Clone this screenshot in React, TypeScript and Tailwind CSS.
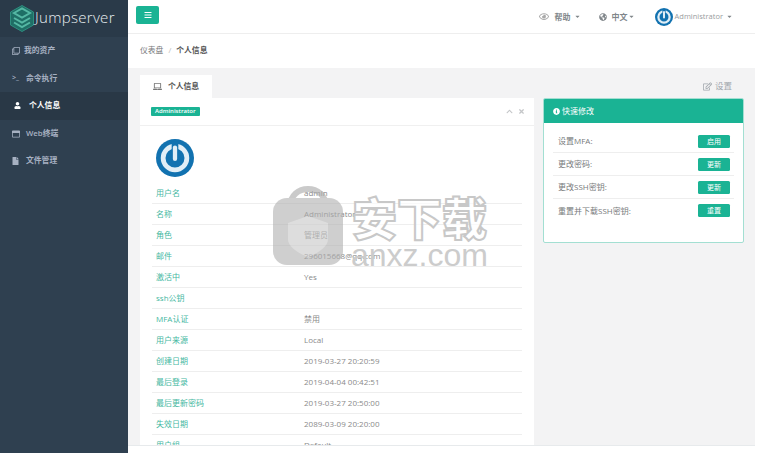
import { FaBars, FaCaretDown, FaChevronUp, FaFile, FaGlobeAmericas, FaInfoCircle, FaLaptop, FaRegClone, FaRegEdit, FaRegEye, FaRegWindowMaximize, FaTimes, FaUser } from "react-icons/fa";
import type { ReactNode } from "react";

const font = "font-['Open_Sans','Noto_Sans_CJK_SC',sans-serif]";

function Avatar({ size }: { size: string }) {
  return (
    <svg viewBox="0 0 40 40" className={size}>
      <circle cx="20" cy="20" r="20" fill="#1272b0" />
      <circle cx="20" cy="20" r="12.500" fill="none" stroke="#e1eef6" strokeWidth="5" />
      <path d="M20 3v8" stroke="#1272b0" strokeWidth="7" />
      <path d="M20 9v12" stroke="#e1eef6" strokeWidth="4.500" strokeLinecap="round" />
    </svg>
  );
}

function Logo() {
  return (
    <svg viewBox="0 0 24 27" className="w-6 h-[27px] shrink-0">
      <path d="M12 .5l11.500 6.500v13L12 26.500.5 20V7z" fill="#1f6f66" stroke="#2f8f80" strokeWidth="1" />
      <path d="M4 8l8-4.500L20 8l-8 4.500zM4 13l8 4.500L20 13M4 17.500l8 4.500 8-4.500" fill="none" stroke="#55b8a4" strokeWidth="2" />
      <path d="M8 8l4 2 4-2" fill="none" stroke="#1f6f66" strokeWidth="1.200" />
    </svg>
  );
}

const nav: { icon: ReactNode; label: string; active?: boolean; pad: string }[] = [
  { icon: <FaRegClone className="w-2 h-2" />, label: "我的资产", pad: "gap-1" },
  { icon: <span className="text-[7px] w-2">&gt;_</span>, label: "命令执行", pad: "gap-1.5" },
  { icon: <FaUser className="w-[7px] h-[7px] text-white" />, label: "个人信息", active: true, pad: "gap-2" },
  { icon: <FaRegWindowMaximize className="w-2 h-2" />, label: "Web终端", pad: "gap-1.5" },
  { icon: <FaFile className="w-[7px] h-2" />, label: "文件管理", pad: "gap-[7px]" },
];

const rows = [
  ["用户名", "admin"],
  ["名称", "Administrator"],
  ["角色", "管理员"],
  ["邮件", "296015668@qq.com"],
  ["激活中", "Yes"],
  ["ssh公钥", ""],
  ["MFA认证", "禁用"],
  ["用户来源", "Local"],
  ["创建日期", "2019-03-27 20:20:59"],
  ["最后登录", "2019-04-04 00:42:51"],
  ["最后更新密码", "2019-03-27 20:50:00"],
  ["失效日期", "2089-03-09 20:20:00"],
  ["用户组", "Default"],
];

const quick = [
  ["设置MFA:", "启用"],
  ["更改密码:", "更新"],
  ["更改SSH密钥:", "更新"],
  ["重置并下载SSH密钥:", "重置"],
];

export default function App() {
  return (
    <div className={`${font} relative flex h-[453px] w-[762px] overflow-hidden bg-white text-[8px] text-[#777a7c]`}>
      <aside className="w-[128px] shrink-0 bg-[#2f4050] text-[#a7b1c2] font-semibold text-[7.8px]">
        <div className="h-[37px] flex items-center gap-px pl-[10px] bg-[#2a3a49]">
          <Logo />
          <span className="text-[15px] font-light text-[#e8eef0] tracking-[0.3px] -mt-[3px]">Jumpserver</span>
        </div>
        {nav.map((n) => (
          <div
            key={n.label}
            className={`h-[27.6px] flex items-center pl-3 ${n.pad} ${n.active ? "bg-[#293846] text-white pl-[14px]" : ""}`}
          >
            {n.icon}
            <span>{n.label}</span>
          </div>
        ))}
      </aside>

      <div className="flex-1 flex flex-col min-w-0 mr-[7px]">
        <header className="h-[34px] shrink-0 flex items-center justify-between pl-[8px] pr-[22px] border-b border-[#eeeeee]">
          <button className="w-[23px] h-[18px] -mt-[3px] rounded-[2px] bg-[#1ab394] text-white flex items-center justify-center">
            <FaBars className="w-2 h-2" />
          </button>
          <div className="flex items-center font-semibold text-[#80868a]">
            <FaRegEye className="w-[12px] h-[9px] mr-[5px] text-[#aaa]" />
            <span>帮助</span>
            <FaCaretDown className="w-[7px] h-[7px] ml-[3px]" />
            <FaGlobeAmericas className="w-2 h-2 ml-[18px] mr-[5px]" />
            <span>中文</span>
            <FaCaretDown className="w-[7px] h-[7px]" />
            <span className="ml-[20px] mr-[2px]"><Avatar size="w-[18px] h-[18px] block" /></span>
            <span className="font-normal text-[#999c9e] text-[7.5px]">Administrator</span>
            <FaCaretDown className="w-[7px] h-[7px] ml-[3px]" />
          </div>
        </header>

        <div className="h-[34px] shrink-0 flex items-center pl-3 text-[7.8px]">
          <span>仪表盘</span>
          <span className="mx-[5px] text-[#bbb]">/</span>
          <span className="font-bold text-[#555]">个人信息</span>
        </div>

        <main className="flex-1 min-h-0 overflow-hidden bg-[#f3f3f4] pl-3 pr-[11px] pt-[7px] flex flex-col">
          <div className="flex items-end justify-between h-[23px] shrink-0">
            <div className="w-[72px] h-[23px] bg-white flex items-center justify-center gap-[6px] font-semibold text-[#555] text-[7.8px]">
              <FaLaptop className="w-[9px] h-[9px] text-[#777]" />
              <span>个人信息</span>
            </div>
            <div className="flex items-center gap-[3px] self-center pr-[12px] text-[#a0a6ac] text-[8.500px]">
              <FaRegEdit className="w-[9px] h-[9px]" />
              <span>设置</span>
            </div>
          </div>
          <div className="flex gap-[9px] flex-1 min-h-0">
            <section className="w-[394px] shrink-0 bg-white overflow-hidden">
              <div className="h-[28px] flex items-center justify-between pl-[11px] pr-[9px] border-b border-[#f0f0f0]">
                <span className="bg-[#1ab394] text-white text-[6px] font-semibold leading-[9px] px-[4px] rounded-[1px]">Administrator</span>
                <div className="flex items-center gap-[5px] text-[#c4c6c8]">
                  <FaChevronUp className="w-[7px] h-[7px]" />
                  <FaTimes className="w-[7px] h-[7px]" />
                </div>
              </div>
              <div className="px-[12px]">
                <div className="pl-[4px] pt-[13px] pb-[6px]">
                  <Avatar size="w-[38px] h-[38px] block" />
                </div>
                {rows.map(([k, v]) => (
                  <div key={k} className="h-[21px] flex items-center border-b border-[#eeeeee] pl-[4px]">
                    <span className="w-[148px] text-[#45b89f]">{k}</span>
                    <span className="text-[#8a8a8a]">{v}</span>
                  </div>
                ))}
              </div>
            </section>
            <aside className="w-[201px] h-[145px] rounded-[2px] border border-[#a3dfd2] bg-white overflow-hidden">
              <div className="h-[24px] bg-[#1ab394] text-white flex items-center gap-[2px] pl-[9px]">
                <FaInfoCircle className="w-[7px] h-[7px]" />
                <span>快速修改</span>
              </div>
              <div className="px-[9px] pt-[7px]">
                {quick.map(([k, b], i) => (
                  <div key={k} className={`h-[23px] flex items-center justify-between pl-[5px] pr-[4px] ${i < 3 ? "border-b border-[#eeeeee]" : ""}`}>
                    <span>{k}</span>
                    <button className="w-[32px] h-[13px] rounded-[1.500px] bg-[#1ab394] text-white text-[7px] leading-none">{b}</button>
                  </div>
                ))}
              </div>
            </aside>
          </div>
        </main>
        <div className="h-2 shrink-0 bg-white border-t border-[#e7eaec]" />
      </div>

      {/* site watermark sitting over the page */}
      <div className="absolute left-[273px] top-[185px] flex items-start gap-[8px] pointer-events-none">
        <svg viewBox="0 0 70 80" className="w-[70px] h-[80px] opacity-60">
          <path d="M17 22C17 -2 53 -2 53 22" fill="none" stroke="#a8a8a8" strokeWidth="6" />
          <rect x="0" y="13" width="70" height="67" rx="14" fill="#b0b0b0" />
          <path d="M35 31l20 7v16c0 8-10 14-20 18-10-4-20-10-20-18V38z" fill="#c8c8c8" />
        </svg>
        <div className="flex flex-col items-center mt-[7px]">
          <span className="font-['Noto_Sans_CJK_SC',sans-serif] font-black text-[45px] leading-[50px] text-white/70 [-webkit-text-stroke:2px_#c8c8c8]">安下载</span>
          <span className="font-['Liberation_Sans',sans-serif] text-[32px] leading-[26px] text-[#cccccc]">anxz.com</span>
        </div>
      </div>
    </div>
  );
}
